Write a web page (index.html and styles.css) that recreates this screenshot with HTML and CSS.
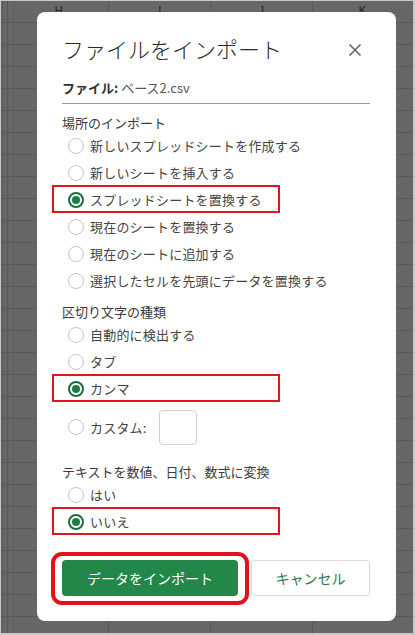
FILE: index.html
```html
<!DOCTYPE html>
<html lang="ja">
<head>
  <meta charset="UTF-8">
  <meta name="viewport" content="width=device-width, initial-scale=1.0">
  <title>ファイルをインポート</title>
  <link rel="stylesheet" href="styles.css">
</head>
<body>
  <div class="sheet">
    <div class="col-heads">
      <span>H</span><span>I</span><span>J</span><span>K</span>
    </div>

    <div class="dialog">
      <div class="dlg-head">
        <h1 class="dlg-title">ファイルをインポート</h1>
        <span class="close">
          <svg width="24" height="24" viewBox="0 0 24 24"><path d="M6.5 6.5 L17.5 17.5 M17.5 6.5 L6.5 17.5" stroke="#666" stroke-width="1.6" fill="none"/></svg>
        </span>
      </div>
      <div class="file-name"><b>ファイル:</b> ベース2.csv</div>

      <div class="group">
        <div class="group-label">場所のインポート</div>
        <div class="opt"><span class="radio"></span>新しいスプレッドシートを作成する</div>
        <div class="opt"><span class="radio"></span>新しいシートを挿入する</div>
        <div class="opt mark"><span class="radio on"></span>スプレッドシートを置換する</div>
        <div class="opt"><span class="radio"></span>現在のシートを置換する</div>
        <div class="opt"><span class="radio"></span>現在のシートに追加する</div>
        <div class="opt"><span class="radio"></span>選択したセルを先頭にデータを置換する</div>
      </div>

      <div class="group">
        <div class="group-label">区切り文字の種類</div>
        <div class="opt"><span class="radio"></span>自動的に検出する</div>
        <div class="opt"><span class="radio"></span>タブ</div>
        <div class="opt mark"><span class="radio on"></span>カンマ</div>
        <div class="opt custom"><span class="radio"></span>カスタム:<span class="custom-box"></span></div>
      </div>

      <div class="group last">
        <div class="group-label">テキストを数値、日付、数式に変換</div>
        <div class="opt"><span class="radio"></span>はい</div>
        <div class="opt mark"><span class="radio on"></span>いいえ</div>
      </div>

      <div class="actions">
        <button class="btn btn-primary">データをインポート</button>
        <button class="btn btn-cancel">キャンセル</button>
      </div>
    </div>
  </div>
</body>
</html>
```

FILE: styles.css
```css
body {
  margin: 0;
  font-family: "Noto Sans CJK JP", "Noto Sans", sans-serif;
  color: #333;
}
.sheet {
  position: relative;
  width: 415px;
  height: 635px;
  box-sizing: border-box;
  border: 1px solid #c9c9c9;
  border-right-width: 2px;
  border-bottom-width: 2px;
  background-color: #676767;
  background-image:
    linear-gradient(to right, transparent 6px, #575757 6px, #575757 7px, transparent 7px, transparent 12px, #5e5e5e 12px, #5e5e5e 13px, transparent 13px),
    repeating-linear-gradient(to right, transparent 0, transparent 101px, #5a5a5a 101px, #5a5a5a 102px),
    repeating-linear-gradient(to bottom, transparent 0, transparent 21px, #595959 21px, #595959 22px);
  background-position: 0 0, 6px 0, 0 0;
  overflow: hidden;
}
.col-heads {
  display: flex;
  padding-left: 7px;
  font-family: "Liberation Sans", Arial, sans-serif;
  font-size: 11px;
  color: #222;
}
.col-heads span {
  width: 102px;
  text-align: center;
  padding-top: 3px;
}
.dialog {
  position: absolute;
  left: 36px;
  top: 11px;
  width: 359px;
  height: 609px;
  box-sizing: border-box;
  padding: 21px 26px 0 25px;
  background: #fff;
  border-radius: 8px;
}
.dlg-head {
  display: flex;
  justify-content: space-between;
  align-items: center;
}
.dlg-title {
  margin: 0;
  font-size: 22px;
  font-weight: 300;
  line-height: 30px;
  color: #2a2a2a;
}
.close {
  display: flex;
  margin-right: 3px;
  margin-top: 3px;
}
.file-name {
  margin-top: 15px;
  padding-bottom: 5px;
  border-bottom: 1px solid #999;
  font-size: 13px;
  line-height: 20px;
  color: #555;
}
.file-name b {
  color: #333;
}
.group {
  margin-top: 10px;
}
.group + .group {
  margin-top: 9px;
}
.group.last {
  margin-top: 18px;
}
.group-label {
  font-size: 13px;
  line-height: 18px;
  color: #3a3a3a;
}
.opt {
  position: relative;
  display: flex;
  align-items: center;
  gap: 6px;
  height: 27px;
  padding-left: 6px;
  font-size: 13px;
  letter-spacing: 0.2px;
  color: #444;
  white-space: nowrap;
}
.opt.mark::before {
  content: "";
  position: absolute;
  top: -1px;
  bottom: 0;
  left: -10px;
  width: 228px;
  box-sizing: border-box;
  border: 2px solid #e1161c;
}
.opt.custom {
  height: 36px;
  margin-top: 7px;
}
.radio {
  display: flex;
  align-items: center;
  justify-content: center;
  width: 16px;
  height: 16px;
  box-sizing: border-box;
  border: 1px solid #c6c6c6;
  border-radius: 50%;
  flex-shrink: 0;
}
.radio.on {
  border: 2px solid #1b6e3f;
}
.radio.on::after {
  content: "";
  width: 8px;
  height: 8px;
  border-radius: 50%;
  background: #1e7d45;
}
.custom-box {
  width: 38px;
  height: 35px;
  box-sizing: border-box;
  margin-left: 6px;
  border: 1px solid #d0d0d0;
  border-radius: 4px;
}
.actions {
  display: flex;
  gap: 13px;
  margin-top: 25px;
}
.btn {
  height: 36px;
  border-radius: 4px;
  font-family: "Noto Sans CJK JP", "Noto Sans", sans-serif;
  font-size: 14px;
  cursor: pointer;
}
.btn-primary {
  position: relative;
  width: 177px;
  border: none;
  background: #23874a;
  color: #fff;
}
.btn-primary::after {
  content: "";
  position: absolute;
  top: -8px;
  bottom: -9px;
  left: -11px;
  right: -11px;
  border: 4px solid #e3111a;
  border-radius: 11px;
}
.btn-cancel {
  width: 120px;
  border: 1px solid #dadada;
  background: #fff;
  color: #2e7a4c;
}
```
